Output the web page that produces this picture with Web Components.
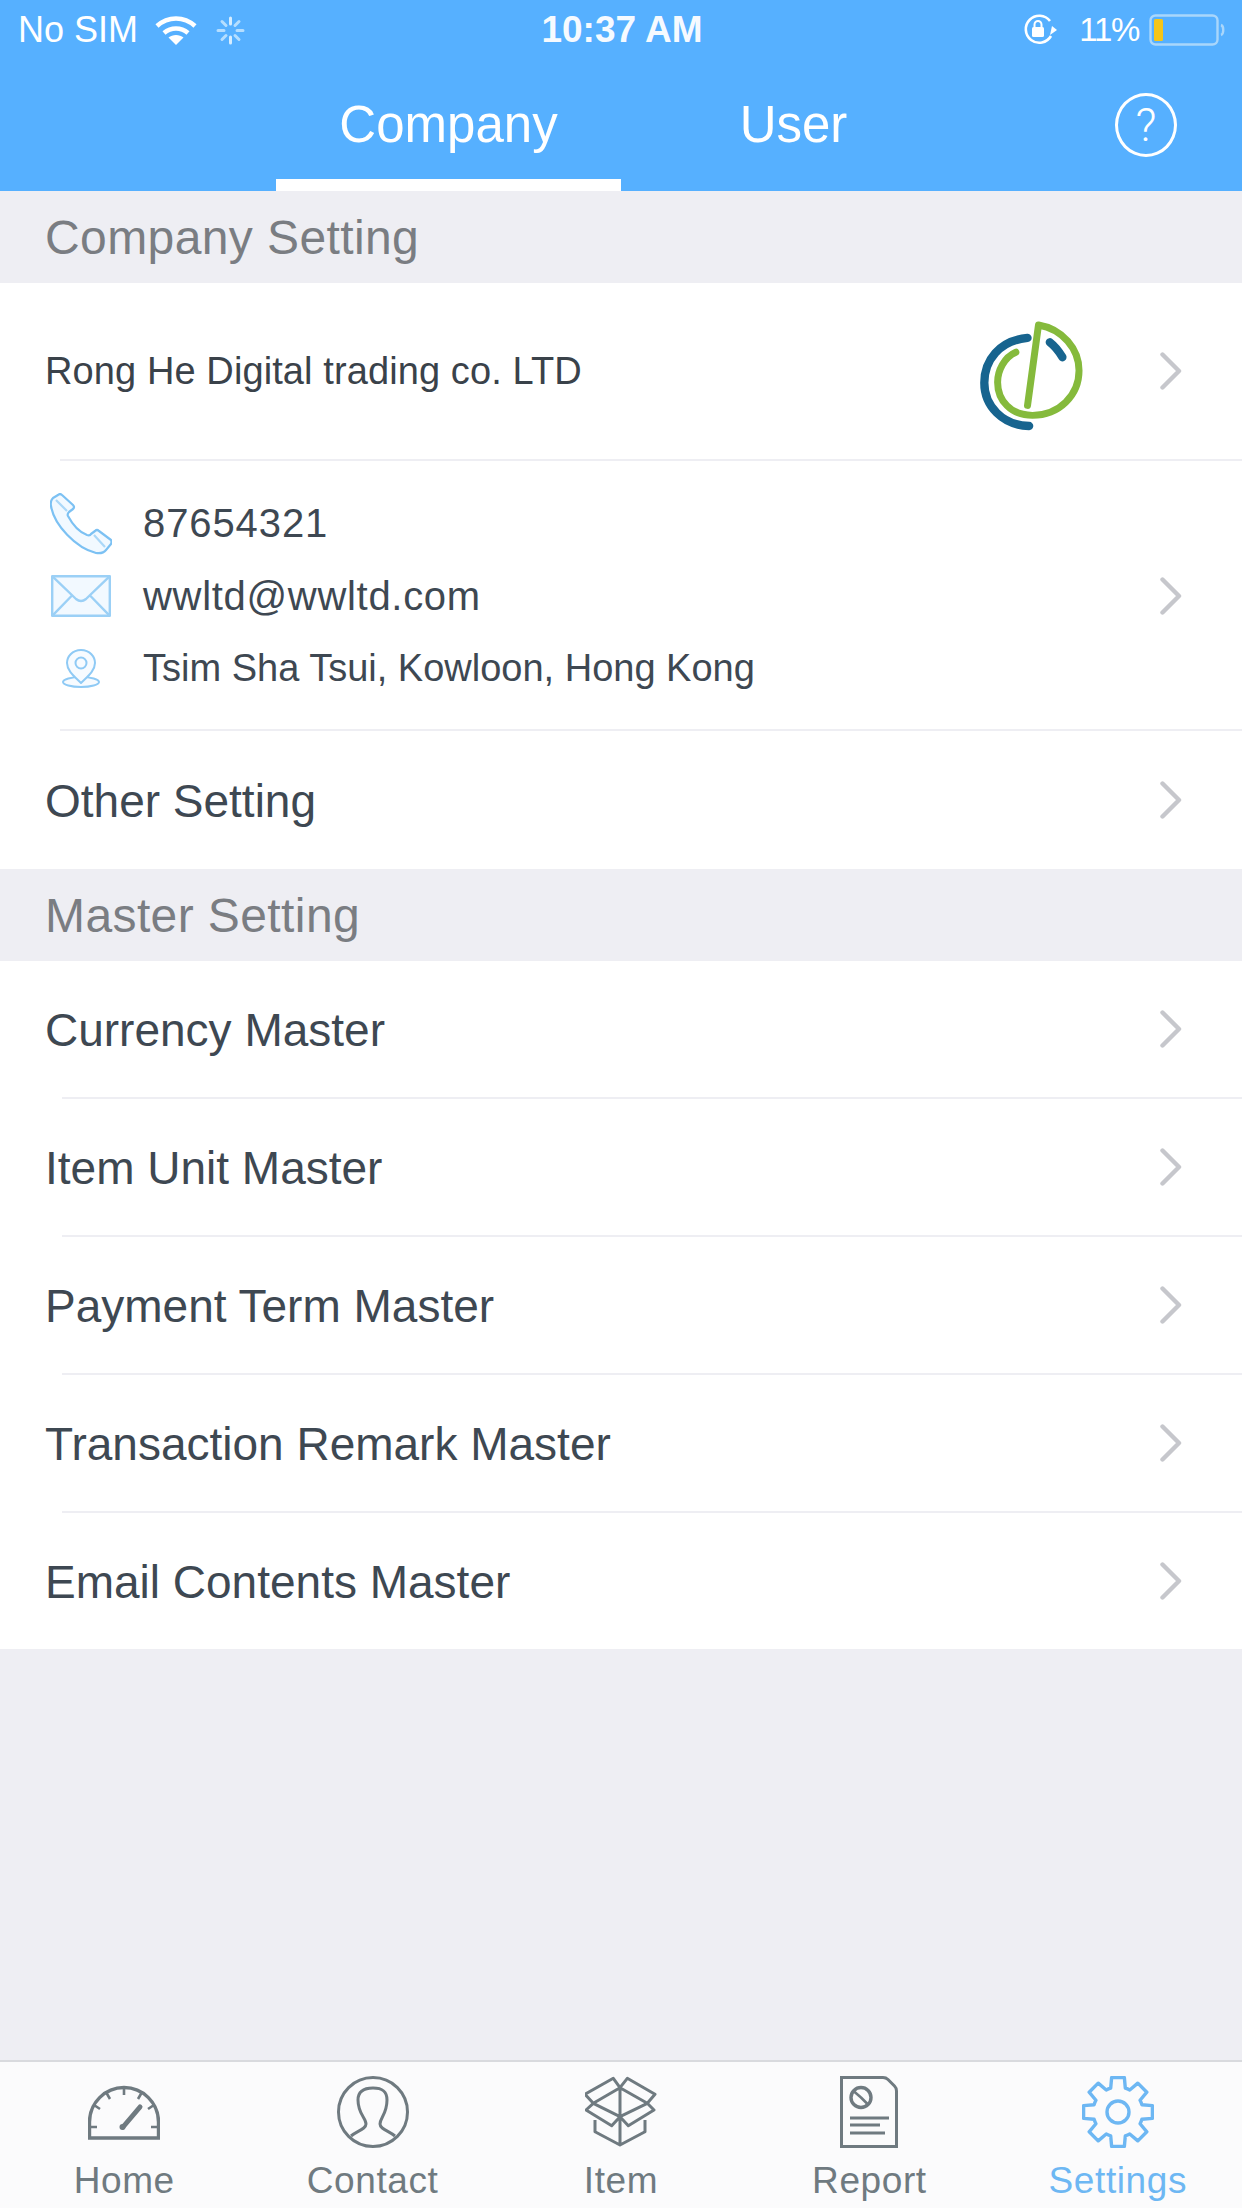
<!DOCTYPE html>
<html lang="en"><head><meta charset="utf-8"><title>Settings</title>
<style>
html,body{margin:0;padding:0;background:#eeeef3}
body{width:1242px;height:2208px;overflow:hidden;font-family:"Liberation Sans",Arial,sans-serif}
settings-app{display:flex}
</style></head><body>
<settings-app>
  <app-header></app-header>
  <main-list>
    <section-head>Company Setting</section-head>
    <company-row name="Rong He Digital trading co. LTD"></company-row>
    <contact-row></contact-row>
    <list-row last>Other Setting</list-row>
    <section-head>Master Setting</section-head>
    <list-row>Currency Master</list-row>
    <list-row>Item Unit Master</list-row>
    <list-row>Payment Term Master</list-row>
    <list-row>Transaction Remark Master</list-row>
    <list-row end>Email Contents Master</list-row>
  </main-list>
  <tab-bar></tab-bar>
</settings-app>
<script>
const el=(name,css,html)=>customElements.define(name,class extends HTMLElement{
  constructor(){super();this.attachShadow({mode:'open'}).innerHTML=`<style>${css}</style>${typeof html==='function'?html(this):html}`;}
});
const chevron=`<svg width="22" height="38" viewBox="0 0 22 38" fill="none" stroke="#c6c7cc" stroke-width="4.4" stroke-linecap="round" stroke-linejoin="round"><path d="M2.5 2.5 L19 19 L2.5 35.5"/></svg>`;

el('settings-app',`:host{display:flex;flex-direction:column;width:1242px;height:2208px;background:#eeeef3}`,`<slot></slot>`);

el('app-header',`
:host{display:block;background:#56b0ff;color:#fff;height:191px}
.status{height:60px;display:grid;grid-template-columns:1fr auto 1fr;align-items:center;padding:0 16px 0 18px;font-size:36px}
.l,.r{display:flex;align-items:center}
.l svg:first-of-type{margin-left:17px}.l svg:last-of-type{margin-left:19px}
.r{justify-content:flex-end}
.time{font-weight:700;font-size:37px;opacity:.95}
.pct{margin:0 10px 0 22px;font-size:33px;letter-spacing:-1.3px}
.nav{height:131px;display:grid;grid-template-columns:276px 345px 345px 276px}
.tab{display:flex;align-items:center;justify-content:center;font-size:51px;padding-bottom:3px;box-sizing:border-box;height:131px}
.tab.on{border-bottom:12px solid #fff;padding:9px 0 0}
.help{display:flex;justify-content:flex-end;padding:33px 65px 0 0}
.q{box-sizing:border-box;width:62px;height:64px;border:3.5px solid #fff;border-radius:50%;display:flex;align-items:center;justify-content:center;font-size:46px;line-height:1;font-family:Roboto,"Liberation Sans",sans-serif;font-weight:300}
`,`<div class="status">
 <div class="l"><span>No SIM</span>
  <svg width="42" height="29" viewBox="0 0 42 29" fill="none" stroke="#fff" stroke-width="4.6"><path d="M2 10 C13 0 29 0 40 10"/><path d="M9 17 C16 11 26 11 33 17"/><path d="M21 29 L13.5 21.5 C17.5 18 24.5 18 28.5 21.5 Z" fill="#fff" stroke="none"/></svg>
  <svg width="29" height="29" viewBox="0 0 29 29" fill="none" stroke="#d6edff" stroke-width="3" stroke-linecap="round"><path d="M14.5 2V8M14.5 21V27" /><path d="M23 5.5L19 9.5M10 19.5L6 23.5M2 14.5H8M21 14.5H27M6 5.5L10 9.5M19 19.5L23 23.5" opacity=".75"/></svg>
 </div>
 <div class="time">10:37 AM</div>
 <div class="r">
  <svg width="34" height="32" viewBox="0 0 34 32" fill="none" stroke="#fff" stroke-width="2.6"><path d="M28 22 A13.5 13.5 0 1 1 27 7"/><path d="M29 12 L34 16 L27 21 Z" fill="#fff" stroke="none"/><rect x="9" y="13" width="12" height="10" rx="1.5" fill="#fff" stroke="none"/><path d="M11.5 13 V10.5 A3.5 3.5 0 0 1 18.5 10.5 V13" stroke-width="2"/></svg>
  <span class="pct">11%</span>
  <svg width="77" height="32" viewBox="0 0 77 32" fill="none"><rect x="1.5" y="1.5" width="67" height="29" rx="5" stroke="#a9d6fb" stroke-width="2.4"/><rect x="5" y="5" width="9" height="22" rx="1.5" fill="#f5c518"/><path d="M72 11 C75 12 75 20 72 21" stroke="#a9d6fb" stroke-width="2.4"/></svg>
 </div>
</div>
<div class="nav"><span></span><div class="tab on">Company</div><div class="tab">User</div><div class="help"><div class="q">?</div></div></div>`);

el('main-list',`:host{display:block;flex:1;min-height:0}`,`<slot></slot>`);

el('section-head',`:host{display:flex;align-items:center;height:91px;padding:1px 0 0 45px;font-size:48px;letter-spacing:.4px;color:#7a7d82;background:#eeeef3}`,`<slot></slot>`);

el('list-row',`
:host{display:block;background:#fff;position:relative}
.row{height:136px;display:flex;align-items:center;justify-content:space-between;padding:0 60px 0 45px;color:#3e4852;font-size:46px}
.row span{padding-top:2px}
.rule{height:2px;margin-left:62px;background:#eeeef3}
:host([last]) .rule,:host([end]) .rule{display:none}
:host([last]) .row{height:138px}
`,`<div class="row"><span><slot></slot></span>${chevron}</div><div class="rule"></div>`);

el('company-row',`
:host{display:block;background:#fff}
.row{height:176px;display:flex;align-items:center;padding:0 60px 0 45px;color:#3a424a;font-size:38px;letter-spacing:.1px}
.name{flex:1}
svg.logo{margin:8px 74px 0 0}
.rule{height:2px;margin-left:60px;background:#eeeef3}
`,(h)=>`<div class="row"><span class="name">${h.getAttribute('name')}</span>
<svg class="logo" width="107" height="113" viewBox="240 90 320 340" fill="none" stroke-linecap="round" stroke-linejoin="round"><path d="M385 147 C300 155 255 215 255 282 C255 352 310 410 390 412" stroke="#17648f" stroke-width="25"/><path d="M452 160 C465 170 480 188 490 205" stroke="#17648f" stroke-width="25"/><path d="M385 350 L418 108 C490 120 540 180 540 245 C540 320 480 380 400 380 C335 380 295 335 295 280 C295 245 315 205 350 190" stroke="#85ba3c" stroke-width="21"/></svg>
${chevron}</div><div class="rule"></div>`);

el('contact-row',`
:host{display:block;background:#fff}
.row{height:268px;display:flex;align-items:center;justify-content:space-between;padding:2px 60px 0 50px;box-sizing:border-box}
.list{display:grid;grid-template-columns:62px auto;column-gap:31px;grid-auto-rows:72.5px;align-items:center;justify-items:center;color:#3e4852;font-size:38px}
.list span{justify-self:start}
.d{font-size:40px;letter-spacing:.9px}.m{font-size:40px;letter-spacing:.7px}
.rule{height:2px;margin-left:60px;background:#eeeef3}
`,`<div class="row"><div class="list">
<svg width="62" height="62" viewBox="0 0 62 62" fill="#f2f9ff" stroke="#7cc1f3" stroke-width="2.2" stroke-linejoin="round"><path d="M12 2 L23 12 Q25 14 23 16 L19 19 Q17 21 18 23 Q26 38 37 42 Q40 43 41 41 L45 38 Q47 36 49 38 L61 47 Q62 49 61 51 L56 57 Q53 61 46 60 C26 55 4 32 1 13 Q0 8 3 5 L8 2 Q10 0 12 2Z"/><path d="M6 7 L17 18M44 42 L55 54" fill="none" opacity=".6"/></svg><span class="d">87654321</span>
<svg width="60" height="42" viewBox="0 0 60 42" fill="#f2f9ff" stroke="#9bd0f6" stroke-width="2.4" stroke-linejoin="round"><rect x="1.2" y="1.2" width="57.6" height="39.6"/><path d="M1.2 1.2 L25 24 Q30 28 35 24 L58.8 1.2M1.2 40.8 L21 20.5M58.8 40.8 L39 20.5" fill="none"/></svg><span class="m">wwltd@wwltd.com</span>
<svg width="38" height="40" viewBox="0 0 38 40" fill="#f7fbff" stroke="#8fcaf5" stroke-width="2" stroke-linejoin="round"><ellipse cx="19" cy="33" rx="18" ry="5"/><path d="M19 1 C10 1 5 8 5 14 C5 22 13 28 19 34 C25 28 33 22 33 14 C33 8 28 1 19 1Z"/><circle cx="19" cy="14" r="5.5" fill="none"/></svg><span>Tsim Sha Tsui, Kowloon, Hong Kong</span>
</div>${chevron}</div><div class="rule"></div>`);

const gear=(()=>{const c=36,R=35,r=25,d=[17,10.5];const P=(a,q)=>{const t=(a-90)*Math.PI/180;return (c+q*Math.cos(t)).toFixed(2)+' '+(c+q*Math.sin(t)).toFixed(2)};
 let s='';for(let k=0;k<8;k++){const a=k*45;s+=(k?`A${r} ${r} 0 0 1 `:'M')+P(a-d[0],r)+'L'+P(a-d[1],R)+'L'+P(a+d[1],R)+'L'+P(a+d[0],r);}
 s+=`A${r} ${r} 0 0 1 `+P(-d[0],r)+'Z';return s})();

const icons={
home:`<path d="M1.5 62 V46 A34.5 34.5 0 0 1 70.5 46 V62 Z" stroke-width="3.4"/><path d="M36 12V19M18.5 17L22 23M53.5 17L50 23M6 29L12 33M66 29L60 33M2 51H9M70 51H63" stroke-width="2.6"/><path d="M35 51 L52 31" stroke-width="5" stroke-linecap="round"/><circle cx="34.5" cy="51" r="3" fill="#6f7a80" stroke="none"/>`,
contact:`<ellipse cx="36" cy="36" rx="34.5" ry="34.5"/><path d="M14 60 C20 55 29 53 29 48 C29 42 21 38 21 24 C21 15 27 12 36 12 C45 12 50 15 50 24 C50 38 43 42 43 48 C43 53 52 55 58 60"/>`,
item:`<path d="M35 11.7 L28.3 2.3 L0 18.3 L8.3 27.3 Z M35 11.7 L42.3 2.3 L70 18.3 L62.3 27.3 Z M8.3 27.3 L35 40.7 L62.3 27.3 M8.3 27.3 L1 34 L26.7 49.7 L35 40.7 M62.3 27.3 L69 34 L43.3 49.7 L35 40.7 M35 11.7 V69 M10 44 V55.7 L35 69 L60 55.7 V44" stroke-linejoin="round"/>`,
report:`<path d="M1.5 1.5 H43 Q46 1.5 48 3.5 L54.5 10 Q56.5 12 56.5 15 V70.5 H1.5 Z"/><circle cx="21" cy="21.5" r="10" stroke-width="3.4"/><path d="M21 21.5 L13.5 15 M21 21.5 L28 28.5" stroke-width="2.6"/><path d="M10 42 H49M10 49 H40M10 57 H45" stroke-width="3"/>`,
settings:`<path d="${gear}" stroke-linejoin="round" stroke-width="3.4"/><circle cx="36" cy="36" r="11" stroke-width="3.4"/>`
};
el('tab-item',`
:host{display:flex;flex-direction:column;align-items:center;flex:1;color:#6f7a80;font-size:37px;letter-spacing:.6px;--c:#6f7a80}
:host([active]){color:#6db7f3;--c:#6db7f3}
svg{display:block;width:var(--w,72px);height:72px;margin-top:14px}
span{margin-top:14px;line-height:38px}
`,h=>{const i=h.getAttribute('icon');const w=i==='report'?58:72;return `<svg viewBox="0 0 ${w} 72" style="--w:${w}px" fill="none" stroke="var(--c)" stroke-width="3">${icons[i]}</svg><span><slot></slot></span>`});
el('tab-bar',`:host{display:flex;height:146px;background:#fbfbfc;border-top:2px solid #d9dade;box-sizing:content-box}`,`
<tab-item icon="home">Home</tab-item><tab-item icon="contact">Contact</tab-item><tab-item icon="item">Item</tab-item><tab-item icon="report">Report</tab-item><tab-item icon="settings" active>Settings</tab-item>`);
</script>
</body></html>
